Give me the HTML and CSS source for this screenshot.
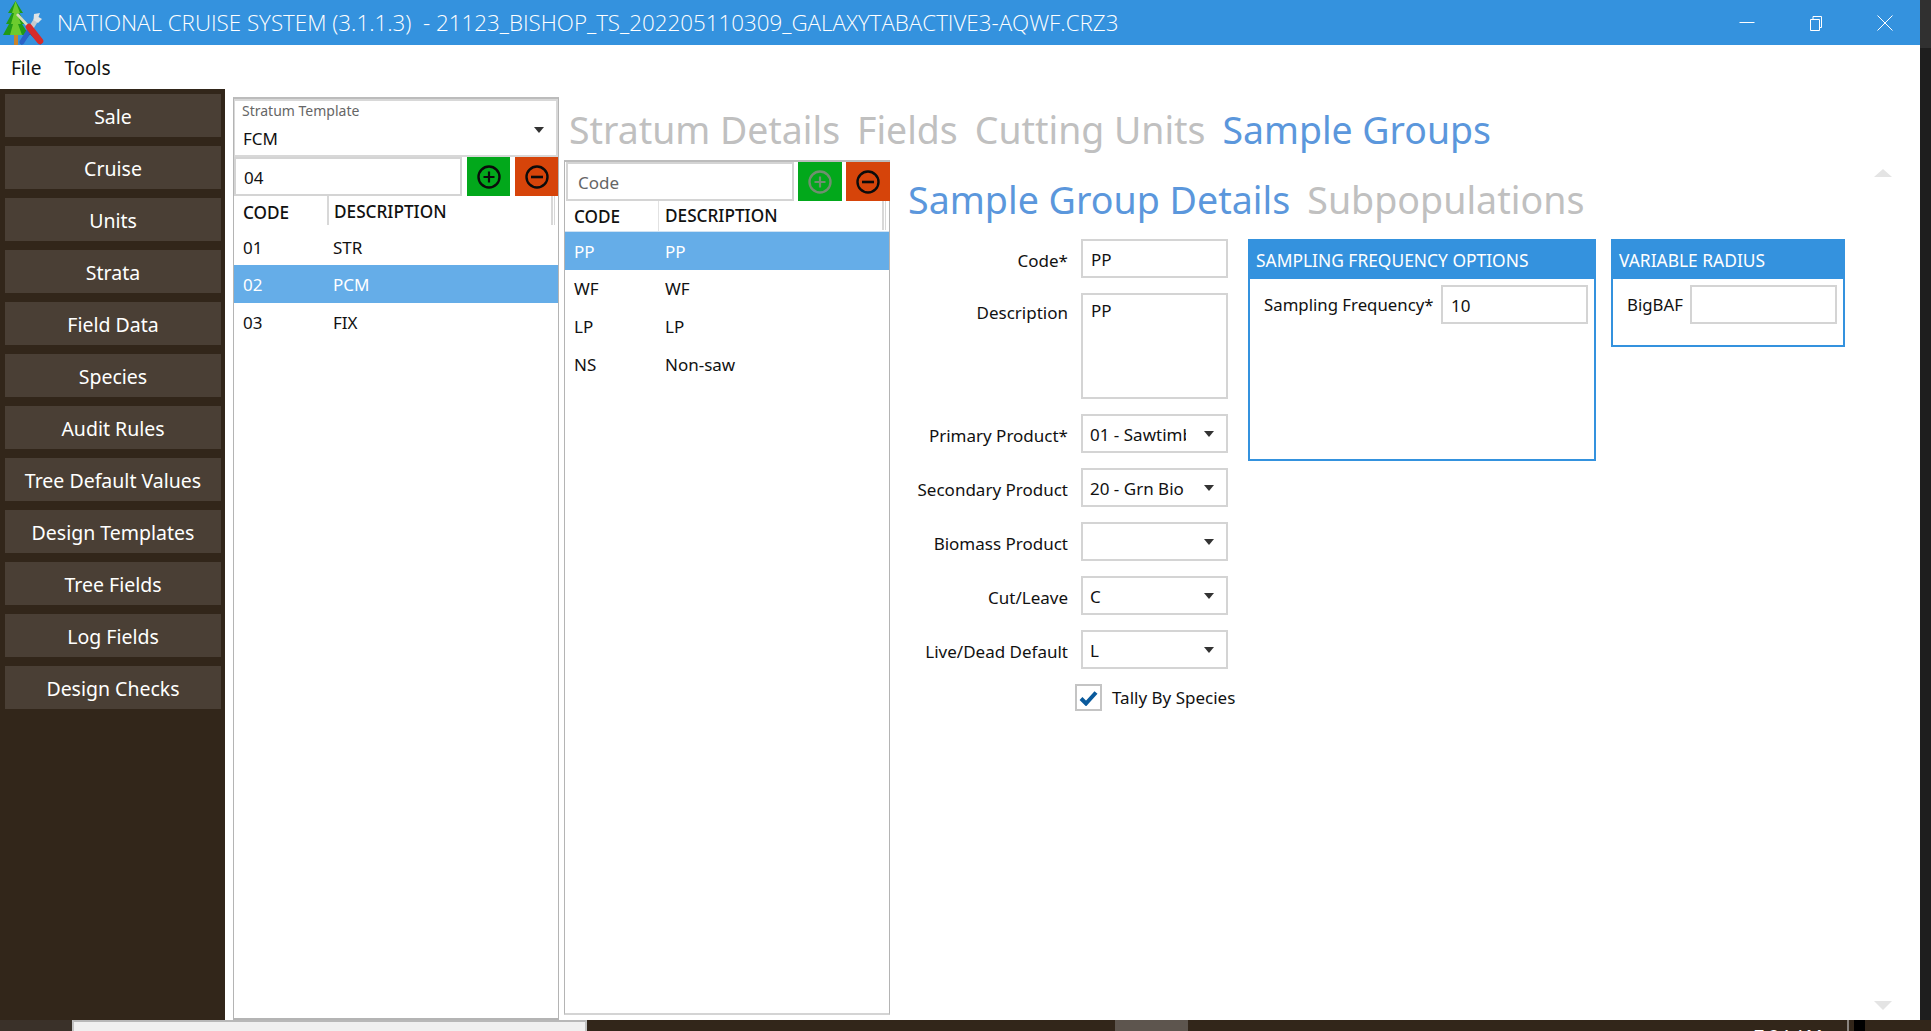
FILE: index.html
```html
<!DOCTYPE html>
<html lang="en">
<head>
<meta charset="utf-8">
<title>National Cruise System</title>
<link rel="stylesheet" href="styles.css">
</head>
<body>
<div class="screen">
  <div class="app">
    <header class="titlebar">
      <svg class="logo" viewBox="0 0 46 45" width="46" height="45">
        <rect x="14" y="33" width="4" height="12" fill="#c8842c"/>
        <path d="M15.5 1 L23 13 L19.5 13 L25 24 L22 24 L29 35 L3 35 L9 24 L6 24 L12 13 L8 13 Z" fill="#1f9a18"/>
        <path d="M15.5 1 L20 13 L17 13 L21 24 L18 24 L22 35 L10 35 L13 24 L11 24 L14 13 L12 13 Z" fill="#6ccb2e"/>
        <path d="M21 44 L30 33 L41 44" fill="none" stroke="#16407f" stroke-width="1.6"/>
        <path d="M30 29 L22 42" stroke="#2a62c8" stroke-width="5" stroke-linecap="round"/>
        <path d="M31 28 L36 20" stroke="#c4cacf" stroke-width="5"/>
        <path d="M34 14 L33.5 20 L38 23 L42 19 L38.5 17 L40 13 Z" fill="#dfe3e5"/>
        <path d="M17 14 L28 26" stroke="#d8dcbc" stroke-width="2.6"/>
        <path d="M29 27 L40 41" stroke="#d62a2a" stroke-width="6.5" stroke-linecap="round"/>
      </svg>
      <span class="title">NATIONAL CRUISE SYSTEM (3.1.1.3)&nbsp; - 21123_BISHOP_TS_202205110309_GALAXYTABACTIVE3-AQWF.CRZ3</span>
      <div class="winctl">
        <svg width="16" height="16" viewBox="0 0 16 16"><path d="M0.5 7.5H15.5" stroke="#fff" fill="none"/></svg>
        <svg width="16" height="16" viewBox="0 0 16 16"><path d="M2.5 4.5H11.5V15.5H2.5Z M5 4.5V1.5H13.5V12.5H11.5" stroke="#fff" fill="none"/></svg>
        <svg width="16" height="16" viewBox="0 0 16 16"><path d="M0.5 0.5L15.5 15.5M15.5 0.5L0.5 15.5" stroke="#fff" fill="none"/></svg>
      </div>
    </header>
    <nav class="menubar"><span>File</span><span>Tools</span></nav>
    <div class="main">
      <aside class="sidebar">
        <div class="navbtn">Sale</div>
        <div class="navbtn">Cruise</div>
        <div class="navbtn">Units</div>
        <div class="navbtn">Strata</div>
        <div class="navbtn">Field Data</div>
        <div class="navbtn">Species</div>
        <div class="navbtn">Audit Rules</div>
        <div class="navbtn">Tree Default Values</div>
        <div class="navbtn">Design Templates</div>
        <div class="navbtn">Tree Fields</div>
        <div class="navbtn">Log Fields</div>
        <div class="navbtn">Design Checks</div>
      </aside>
      <section class="panel strata-panel">
        <div class="combo">
          <div class="combo-label">Stratum Template</div>
          <div class="combo-row"><span>FCM</span><i class="caret"></i></div>
        </div>
        <div class="addrow">
          <div class="textbox addbox">04</div>
          <div class="iconbtn add"><svg width="24" height="24" viewBox="0 0 24 24"><circle cx="12" cy="12" r="10.5" fill="none" stroke="#0b0b0b" stroke-width="2.4"/><path d="M12 6.5V17.5M6.5 12H17.5" stroke="#0b0b0b" stroke-width="2.2"/></svg></div>
          <div class="iconbtn del"><svg width="24" height="24" viewBox="0 0 24 24"><circle cx="12" cy="12" r="10.5" fill="none" stroke="#0b0b0b" stroke-width="2.4"/><path d="M6 12H18" stroke="#0b0b0b" stroke-width="2.6"/></svg></div>
        </div>
        <div class="table t1">
          <div class="thead"><span class="c1">CODE</span><span class="c2">DESCRIPTION</span><i class="grip"></i></div>
          <div class="trow"><span class="c1">01</span><span class="c2">STR</span></div>
          <div class="trow sel"><span class="c1">02</span><span class="c2">PCM</span></div>
          <div class="trow"><span class="c1">03</span><span class="c2">FIX</span></div>
        </div>
      </section>
      <section class="right">
        <div class="tabs">
          <span>Stratum Details</span><span>Fields</span><span>Cutting Units</span><span class="on">Sample Groups</span>
        </div>
        <div class="right-body">
          <section class="panel groups-panel">
            <div class="addrow">
              <div class="textbox addbox ph">Code</div>
              <div class="iconbtn add"><svg width="24" height="24" viewBox="0 0 24 24"><circle cx="12" cy="12" r="10.5" fill="none" stroke="#6f8f6f" stroke-width="2.4"/><path d="M12 6.5V17.5M6.5 12H17.5" stroke="#6f8f6f" stroke-width="2.2"/></svg></div>
              <div class="iconbtn del"><svg width="24" height="24" viewBox="0 0 24 24"><circle cx="12" cy="12" r="10.5" fill="none" stroke="#0b0b0b" stroke-width="2.4"/><path d="M6 12H18" stroke="#0b0b0b" stroke-width="2.6"/></svg></div>
            </div>
            <div class="table t2">
              <div class="thead"><span class="c1">CODE</span><span class="c2">DESCRIPTION</span><i class="grip"></i></div>
              <div class="trow sel"><span class="c1">PP</span><span class="c2">PP</span></div>
              <div class="trow"><span class="c1">WF</span><span class="c2">WF</span></div>
              <div class="trow"><span class="c1">LP</span><span class="c2">LP</span></div>
              <div class="trow"><span class="c1">NS</span><span class="c2">Non-saw</span></div>
            </div>
          </section>
          <section class="details">
            <div class="subtabs"><span class="on">Sample Group Details</span><span>Subpopulations</span></div>
            <div class="detail-body">
              <div class="form">
                <label>Code*</label><div class="textbox">PP</div>
                <label class="top">Description</label><div class="textbox area">PP</div>
                <label>Primary Product*</label><div class="textbox select"><span class="val">01 - Sawtimber</span><i class="caret"></i></div>
                <label>Secondary Product</label><div class="textbox select"><span class="val">20 - Grn Bio</span><i class="caret"></i></div>
                <label>Biomass Product</label><div class="textbox select"><span class="val"></span><i class="caret"></i></div>
                <label>Cut/Leave</label><div class="textbox select"><span class="val">C</span><i class="caret"></i></div>
                <label>Live/Dead Default</label><div class="textbox select"><span class="val">L</span><i class="caret"></i></div>
                <div class="check">
                  <span class="checkbox"><svg width="19" height="16" viewBox="0 0 19 16"><path d="M2 8.5L7 13.5L17 2.5" fill="none" stroke="#0a5a9c" stroke-width="4"/></svg></span>
                  <span>Tally By Species</span>
                </div>
              </div>
              <div class="card freq">
                <div class="card-head">SAMPLING FREQUENCY OPTIONS</div>
                <div class="card-row"><span>Sampling Frequency*</span><div class="textbox cardbox">10</div></div>
              </div>
              <div class="card radius">
                <div class="card-head">VARIABLE RADIUS</div>
                <div class="card-row"><span>BigBAF</span><div class="textbox cardbox"></div></div>
              </div>
            </div>
          </section>
          <div class="scroller"><i class="up"></i><i class="down"></i></div>
        </div>
      </section>
    </div>
  </div>
  <div class="edge"><div class="edge-top"></div></div>
</div>
<footer class="desk">
  <div class="desk-left"></div>
  <div class="desk-win"></div>
  <div class="desk-thumb"></div>
  <div class="desk-clock">7:24 AM</div>
  <div class="desk-line"></div>
  <div class="desk-end"></div>
</footer>
</body>
</html>
```
FILE: styles.css
```css
* { box-sizing: border-box; }
html, body { margin: 0; height: 100%; }
body {
  width: 1931px; height: 1031px; overflow: hidden;
  display: flex; flex-direction: column;
  font-family: "Noto Sans", "Open Sans", sans-serif;
  font-size: 17px; color: #111; background: #32261a;
}
.screen { display: flex; height: 1020px; flex: none; }
.app { width: 1920px; display: flex; flex-direction: column; background: #fff; }
.edge { width: 11px; background: #1e1e1e; }
.edge-top { height: 48px; background: #303030; }

.titlebar { height: 45px; flex: none; background: #3492de; display: flex; align-items: center; color: #fff; }
.logo { flex: none; margin-right: 11px; }
.title { font-family: "Open Sans", sans-serif; font-weight: 300; font-size: 22.35px; white-space: pre; }
.winctl { margin-left: auto; display: flex; gap: 53px; padding-right: 27px; align-items: center; }

.menubar { height: 44px; flex: none; display: flex; align-items: center; padding: 2px 0 0 11px; gap: 23px; font-size: 19px; }

.main { flex: 1; display: flex; min-height: 0; }
.sidebar { width: 225px; flex: none; background: #32261a; padding: 5px 4px 0 5px; display: flex; flex-direction: column; gap: 9px; }
.navbtn { height: 43px; flex: none; background: #4a3f35; color: #fff; font-size: 19.5px; padding-top: 1px; display: flex; align-items: center; justify-content: center; }

.panel { border: 1px solid #b4b4b4; border-top: 2px solid #bcbcbc; background: #fff; display: flex; flex-direction: column; }
.strata-panel { width: 326px; margin: 8px 0 0 8px; border-bottom-width: 2px; }

.combo { height: 58px; flex: none; border: 2px solid #d8d8d8; border-left-width: 1px; padding: 0 3px 0 7px; }
.combo-label { font-size: 14px; line-height: 20px; color: #666; }
.combo-row { display: flex; justify-content: space-between; align-items: center; font-size: 17px; line-height: 24px; padding: 6px 9px 0 1px; }
.combo-row .caret { margin-top: -18px; }
.caret { width: 0; height: 0; border-left: 5px solid transparent; border-right: 5px solid transparent; border-top: 6px solid #333; flex: none; }

.addrow { display: flex; height: 39px; flex: none; }
.addbox { flex: 1; }
.iconbtn { width: 43px; margin-left: 5px; display: flex; align-items: center; justify-content: center; flex: none; }
.iconbtn.add { background: #02a81b; }
.iconbtn.del { background: #d6440a; }

.textbox { height: 39px; border: 2px solid #d4d4d4; display: flex; align-items: center; padding: 1px 0 0 8px; font-size: 17px; }
.ph { color: #666; padding-left: 10px; }
.groups-panel .addrow { margin-right: -1px; }
.groups-panel .iconbtn { width: 44px; margin-left: 4px; }
.groups-panel .addbox { margin-left: 1px; }

.table { flex: 1; }
.thead { display: flex; align-items: center; height: 30px; font-weight: 500; font-size: 17.2px; position: relative; }
.trow { display: flex; align-items: center; height: 38px; font-size: 17px; }
.trow.sel { background: #65ade8; color: #fff; }
.c1, .c2 { display: block; }
.t1 .c1 { width: 99px; padding-left: 9px; }
.t1 .thead { height: 31px; }
.t1 .thead .c2 { border-left: 2px solid #d8d8d8; height: 29px; line-height: 31px; padding-left: 5px; margin-left: -6px; align-self: flex-start; }
.t1 .thead .c1 { padding-top: 2px; }
.t1 .thead + .trow { padding-top: 2px; }
.t2 .c1 { width: 100px; padding-left: 9px; }
.t2 .thead { height: 31px; border-bottom: 1px solid #cfe2f3; }
.t2 .thead .c2 { border-left: 1px solid #e2e2e2; height: 30px; line-height: 30px; padding-left: 6px; margin-left: -7px; }
.t2 .trow { height: 37.6px; padding-top: 1px; }
.grip { position: absolute; right: 3px; top: 0; width: 4px; height: 29px; border-left: 2px solid #d8d8d8; border-right: 1px solid #d8d8d8; }

.right { flex: 1; display: flex; flex-direction: column; margin-left: 5px; min-width: 0; }
.tabs { height: 71px; flex: none; display: flex; align-items: center; gap: 17px; padding-left: 5px; font-size: 37.4px; color: #c0c0c0; padding-top: 10px; white-space: nowrap; }
.on { color: #5b97dc; }
.right-body { display: flex; height: 855px; flex: none; }
.groups-panel { width: 326px; flex: none; height: 855px; border-bottom: 2px solid #d4d4d4; }
.details { padding-left: 18px; flex: none; }
.subtabs { height: 79px; display: flex; align-items: center; gap: 17px; font-size: 37.6px; color: #c0c0c0; white-space: nowrap; }
.detail-body { display: flex; align-items: flex-start; }
.form { display: grid; grid-template-columns: 160px 147px; column-gap: 13px; row-gap: 15px; width: 320px; margin-right: 20px; align-items: center; }
.form label { text-align: right; padding-top: 3px; white-space: nowrap; display: flex; justify-content: flex-end; }
.form label.top { align-self: start; padding-top: 8px; }
.area { height: 106px; align-items: flex-start; padding-top: 4px; }
.select { overflow: hidden; padding-left: 7px; position: relative; }
.val { width: 96px; overflow: hidden; white-space: nowrap; display: block; }
.select .caret { margin-left: 18px; }
.check { grid-column: 1 / 3; display: flex; align-items: center; gap: 10px; margin-left: 167px; height: 27px; white-space: nowrap; }
.checkbox { width: 27px; height: 27px; border: 2px solid #c4c4c4; display: flex; align-items: center; justify-content: center; flex: none; }

.card { border: 2px solid #3492de; flex: none; }
.freq { width: 348px; height: 222px; margin-right: 15px; }
.radius { width: 234px; height: 108px; }
.card-head { height: 38px; background: #3492de; color: #fff; display: flex; align-items: center; padding-left: 6px; font-size: 17.4px; }
.card-row { display: flex; align-items: center; justify-content: space-between; padding: 6px 6px 0 14px; white-space: nowrap; font-size: 16.8px; }
.cardbox { width: 147px; }

.scroller { margin-left: 29px; width: 18px; display: flex; flex-direction: column; justify-content: space-between; padding: 9px 0 5px; height: 855px; }
.scroller .up { border-left: 9px solid transparent; border-right: 9px solid transparent; border-bottom: 8px solid #e4e4e4; width: 0; }
.scroller .down { border-left: 9px solid transparent; border-right: 9px solid transparent; border-top: 9px solid #e4e4e4; width: 0; }

.desk { height: 11px; flex: none; display: flex; overflow: hidden; background: #32261a; }
.desk-left { width: 72px; background: #3a3129; flex: none; }
.desk-win { width: 515px; background: #f0f0f0; border-top: 2px solid #b8b8b8; border-left: 2px solid #c4c4c4; border-right: 2px solid #c4c4c4; flex: none; }
.desk-thumb { width: 73px; margin-left: 528px; background: #5d554e; flex: none; }
.desk-clock { margin-left: 566px; width: 93px; color: #fff; font-size: 18px; line-height: 22px; margin-top: 5px; white-space: nowrap; flex: none; }
.desk-line { width: 2px; background: #8a8580; flex: none; }
.desk-end { margin-left: 5px; width: 11px; background: #000; flex: none; }
```
